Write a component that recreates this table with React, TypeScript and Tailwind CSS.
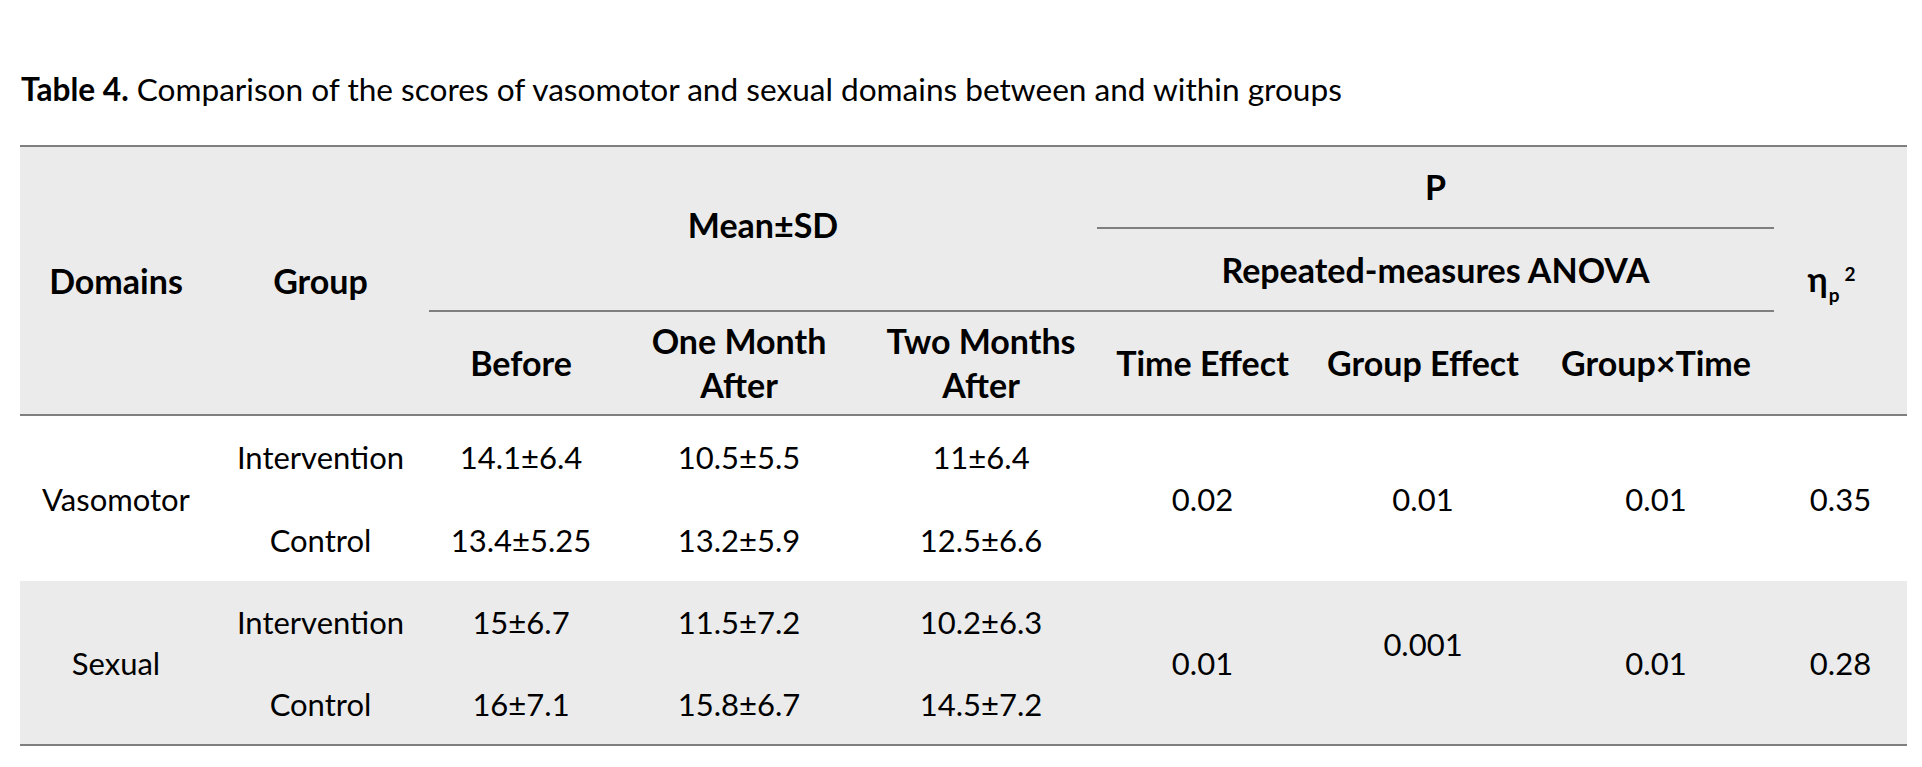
import React from "react";

const font = { fontFamily: "Lato, 'Noto Sans', sans-serif" };

export default function App() {
  const th = "font-bold text-black text-center align-middle px-0 text-[34px] leading-[44px] whitespace-nowrap";
  const td = "text-black text-center align-middle px-0 text-[31px] leading-[44px] whitespace-nowrap";
  const line = "border-[#7f7f7f]";
  return (
    <div className="w-[1922px] h-[767px] bg-white pl-[20px] pr-[15px] pt-[70px]" style={font}>
      <div className="text-[31.6px] leading-[38px] text-black whitespace-nowrap pl-[1px]">
        <span className="font-bold">Table 4.</span> Comparison of the scores of vasomotor and sexual domains between and within groups
      </div>
      <table className="mt-[37px] w-[1887px] table-fixed border-collapse">
        <colgroup>
          <col className="w-[192px]" />
          <col className="w-[217px]" />
          <col className="w-[184px]" />
          <col className="w-[252px]" />
          <col className="w-[232px]" />
          <col className="w-[211px]" />
          <col className="w-[230px]" />
          <col className="w-[236px]" />
          <col className="w-[133px]" />
        </colgroup>
        <thead className="bg-[#ebebeb]">
          <tr className="h-[82px]">
            <th rowSpan={3} className={`${th} border-t-2 border-b-2 ${line}`}>Domains</th>
            <th rowSpan={3} className={`${th} border-t-2 border-b-2 ${line}`}>Group</th>
            <th colSpan={3} rowSpan={2} className={`${th} border-t-2 border-b-2 ${line} pb-[8px]`}>Mean±SD</th>
            <th colSpan={3} className={`${th} border-t-2 border-b-2 ${line}`}>P</th>
            <th rowSpan={3} className={`${th} border-t-2 border-b-2 ${line} pb-[4px]`}>
              <span className="inline-block pr-[18px]">
                <span>η</span>
                <span className="relative top-[10px] ml-[1px] text-[19px] leading-[20px]">p</span>
                <span className="relative top-[-11px] ml-[5px] text-[19px] leading-[20px]">2</span>
              </span>
            </th>
          </tr>
          <tr className="h-[83px]">
            <th colSpan={3} className={`${th} border-b-2 ${line}`}>Repeated-measures ANOVA</th>
          </tr>
          <tr className="h-[104px]">
            <th className={`${th} border-b-2 ${line}`}>Before</th>
            <th className={`${th} border-b-2 ${line}`}>
              One Month
              <br />
              After
            </th>
            <th className={`${th} border-b-2 ${line}`}>
              Two Months
              <br />
              After
            </th>
            <th className={`${th} border-b-2 ${line}`}>Time Effect</th>
            <th className={`${th} border-b-2 ${line}`}>Group Effect</th>
            <th className={`${th} border-b-2 ${line}`}>Group×Time</th>
          </tr>
        </thead>
        <tbody>
          <tr className="h-[83px] bg-white">
            <td rowSpan={2} className={td}>Vasomotor</td>
            <td className={td}>Intervention</td>
            <td className={td}>14.1±6.4</td>
            <td className={td}>10.5±5.5</td>
            <td className={td}>11±6.4</td>
            <td rowSpan={2} className={td}>0.02</td>
            <td rowSpan={2} className={td}>0.01</td>
            <td rowSpan={2} className={td}>0.01</td>
            <td rowSpan={2} className={td}>0.35</td>
          </tr>
          <tr className="h-[83px] bg-white">
            <td className={td}>Control</td>
            <td className={td}>13.4±5.25</td>
            <td className={td}>13.2±5.9</td>
            <td className={td}>12.5±6.6</td>
          </tr>
          <tr className="h-[82px] bg-[#ebebeb]">
            <td rowSpan={2} className={`${td} border-b-2 ${line}`}>Sexual</td>
            <td className={td}>Intervention</td>
            <td className={td}>15±6.7</td>
            <td className={td}>11.5±7.2</td>
            <td className={td}>10.2±6.3</td>
            <td rowSpan={2} className={`${td} border-b-2 ${line}`}>0.01</td>
            <td rowSpan={2} className={`${td} border-b-2 ${line} pb-[38px]`}>0.001</td>
            <td rowSpan={2} className={`${td} border-b-2 ${line}`}>0.01</td>
            <td rowSpan={2} className={`${td} border-b-2 ${line}`}>0.28</td>
          </tr>
          <tr className="h-[82px] bg-[#ebebeb]">
            <td className={`${td} border-b-2 ${line}`}>Control</td>
            <td className={`${td} border-b-2 ${line}`}>16±7.1</td>
            <td className={`${td} border-b-2 ${line}`}>15.8±6.7</td>
            <td className={`${td} border-b-2 ${line}`}>14.5±7.2</td>
          </tr>
        </tbody>
      </table>
    </div>
  );
}
